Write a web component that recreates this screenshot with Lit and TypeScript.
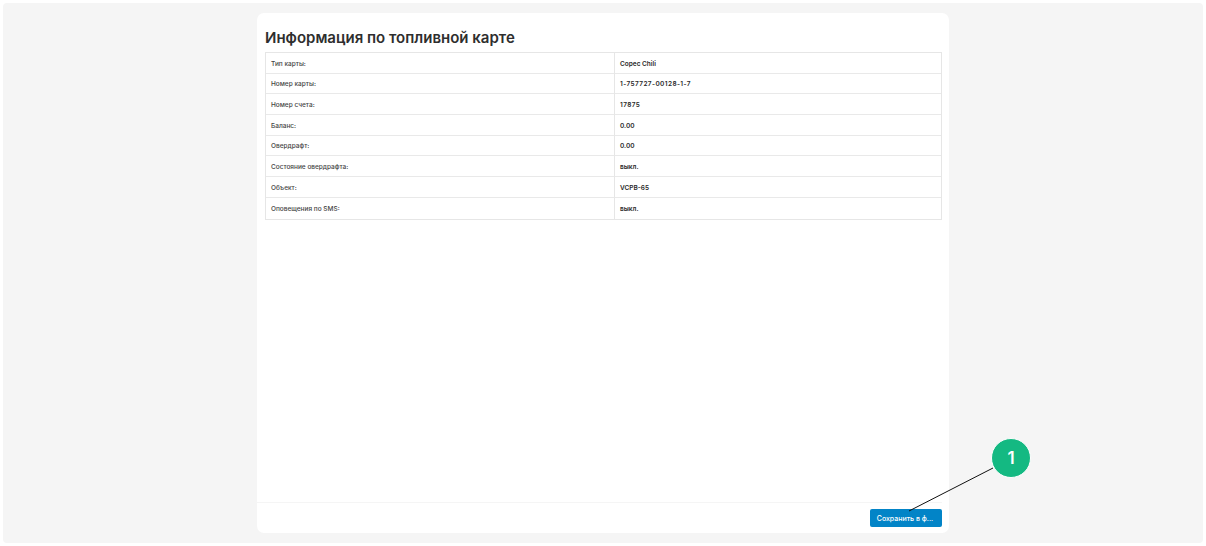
import { LitElement, html, css, svg } from "lit";
import { customElement } from "lit/decorators.js";

const rows: [string, string, boolean?][] = [
  ["Тип карты:", "Copec Chili"],
  ["Номер карты:", "1-757727-00128-1-7", true],
  ["Номер счета:", "17875", true],
  ["Баланс:", "0.00"],
  ["Овердрафт:", "0.00"],
  ["Состояние овердрафта:", "выкл."],
  ["Объект:", "VCPB-65"],
  ["Оповещения по SMS:", "выкл."],
];

@customElement("app-root")
export class AppRoot extends LitElement {
  static styles = css`
    :host {
      display: block;
      position: relative;
      width: 1206px;
      height: 546px;
      box-sizing: border-box;
      padding: 3px;
      background: #fff;
      font-family: Inter, "Noto Sans", sans-serif;
      overflow: hidden;
    }
    .panel {
      height: 100%;
      box-sizing: border-box;
      background: #f5f5f5;
      border-radius: 4px;
      padding: 10px 254px 10px;
      display: flex;
    }
    .card {
      flex: 1;
      background: #fff;
      border-radius: 7px;
      display: flex;
      flex-direction: column;
    }
    .body {
      flex: 1;
      padding: 13px 7px 0 8px;
    }
    h1 {
      margin: 0 0 2px;
      font-size: 15px;
      line-height: 24px;
      font-weight: 600;
      color: #2e2e2e;
    }
    .table {
      border: 1px solid #e6e6e6;
      display: grid;
      grid-template-columns: 348px 1fr;
    }
    .cell {
      height: 20.7px;
      box-sizing: border-box;
      padding: 1.4px 0 0 5px;
      display: flex;
      align-items: center;
      border-bottom: 1px solid #e9e9e9;
      font-size: 6.5px;
      font-weight: 500;
      color: #444;
    }
    .cell.last {
      border-bottom: 0;
    }
    .cell.value {
      border-left: 1px solid #e6e6e6;
      font-weight: 600;
      color: #2a2a2a;
    }
    .cell.num {
      letter-spacing: 0.4px;
    }
    .footer {
      margin: 0 7px 0 0;
      border-top: 1px solid #f5f5f5;
      padding: 6px 0 6px;
      display: flex;
      justify-content: flex-end;
    }
    .btn {
      width: 72px;
      height: 18px;
      border: 0;
      border-radius: 2px;
      background: #0284c7;
      color: #fff;
      font: 500 7px Inter, "Noto Sans", sans-serif;
      padding: 0 2px 0 0;
    }
    .callout {
      position: absolute;
      left: 0;
      top: 0;
      pointer-events: none;
    }
    .badge {
      position: absolute;
      left: 991px;
      top: 438px;
      width: 40px;
      height: 40px;
      box-sizing: border-box;
      border-radius: 50%;
      background: #14b982;
      border: 1px solid #fff;
      color: #fff;
      font-size: 17px;
      font-weight: 600;
      display: flex;
      align-items: center;
      justify-content: center;
    }
  `;

  render() {
    return html`
      <div class="panel">
        <div class="card">
          <div class="body">
            <h1>Информация по топливной карте</h1>
            <div class="table">
              ${rows.map(
                ([k, v, num], i) => html`
                  <div class="cell ${i === rows.length - 1 ? "last" : ""}">${k}</div>
                  <div class="cell value ${num ? "num" : ""} ${i === rows.length - 1 ? "last" : ""}">${v}</div>
                `
              )}
            </div>
          </div>
          <div class="footer"><button class="btn">Сохранить в ф...</button></div>
        </div>
      </div>
      <svg class="callout" width="1206" height="546">
        ${svg`<line x1="993" y1="468" x2="909" y2="511" stroke="#111" stroke-width="1"></line>`}
      </svg>
      <div class="badge">1</div>
    `;
  }
}
